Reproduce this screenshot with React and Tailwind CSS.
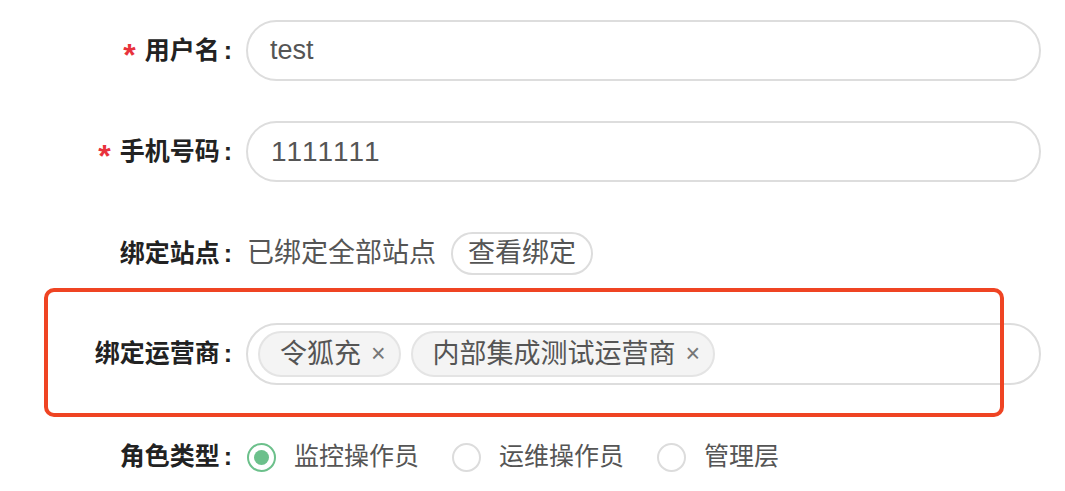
import React from "react";

const FONT = { fontFamily: '"Liberation Sans", "Noto Sans CJK SC", sans-serif' };

function Label({ required, children }) {
  return (
    <div className="w-[232px] shrink-0 flex items-center justify-end text-[25px] font-bold text-[#222]">
      {required && <span className="text-[#e8323c] mr-[9px] text-[32px] leading-none mt-[8px]">*</span>}
      <span>{children}</span>
      <span className="ml-[4px]">:</span>
    </div>
  );
}

function Radio({ checked, children }) {
  return (
    <div className="flex items-center">
      <div
        className={
          "w-[29px] h-[29px] rounded-full flex items-center justify-center border-2 " +
          (checked ? "border-[#6cc08b]" : "border-[#dcdcdc]")
        }
      >
        {checked && <div className="w-[15px] h-[15px] rounded-full bg-[#6cc08b]" />}
      </div>
      <span className="ml-[18px] text-[25px] text-[#555]">{children}</span>
    </div>
  );
}

function Tag({ children }) {
  return (
    <div className="h-[46px] flex items-center rounded-full border-2 border-[#e4e4e4] bg-[#f4f4f4] pl-[20px] pr-[13px] text-[27px] text-[#555]">
      <span>{children}</span>
      <span className="ml-[10px] text-[25px] font-light text-[#777]">×</span>
    </div>
  );
}

export default function App() {
  return (
    <div className="relative w-[1065px] h-[491px] bg-white overflow-hidden" style={FONT}>
      <div className="flex flex-col pt-[20px] pr-[24px]">
        <div className="flex items-center h-[61px]">
          <Label required>用户名</Label>
          <div className="ml-[14px] flex-1 h-full rounded-full border-2 border-[#dddddd] flex items-center pl-[22px] text-[27px] text-[#555]">
            test
          </div>
        </div>
        <div className="flex items-center h-[61px] mt-[40px]">
          <Label required>手机号码</Label>
          <div className="ml-[14px] flex-1 h-full rounded-full border-2 border-[#dddddd] flex items-center pl-[23px] text-[28px] text-[#555] tracking-[2px]">
            1111111
          </div>
        </div>
        <div className="flex items-center h-[43px] mt-[50px]">
          <Label>绑定站点</Label>
          <span className="ml-[15px] text-[27px] text-[#555]">已绑定全部站点</span>
          <div className="ml-[15px] h-full rounded-full border-2 border-[#dddddd] flex items-center px-[15px] text-[27px] text-[#555]">
            查看绑定
          </div>
        </div>
        <div className="flex items-center h-[62px] mt-[48px]">
          <Label>绑定运营商</Label>
          <div className="ml-[14px] flex-1 h-full rounded-full border-2 border-[#dddddd] flex items-center pl-[10px] gap-[10px]">
            <Tag>令狐充</Tag>
            <Tag>内部集成测试运营商</Tag>
          </div>
        </div>
        <div className="flex items-center h-[30px] mt-[57px]">
          <Label>角色类型</Label>
          <div className="ml-[15px] flex items-center gap-[33px]">
            <Radio checked>监控操作员</Radio>
            <Radio>运维操作员</Radio>
            <Radio>管理层</Radio>
          </div>
        </div>
      </div>
      <div className="absolute left-[44px] top-[288px] w-[960px] h-[129px] rounded-[10px] border-[4px] border-[#ef4423] pointer-events-none" />
    </div>
  );
}
